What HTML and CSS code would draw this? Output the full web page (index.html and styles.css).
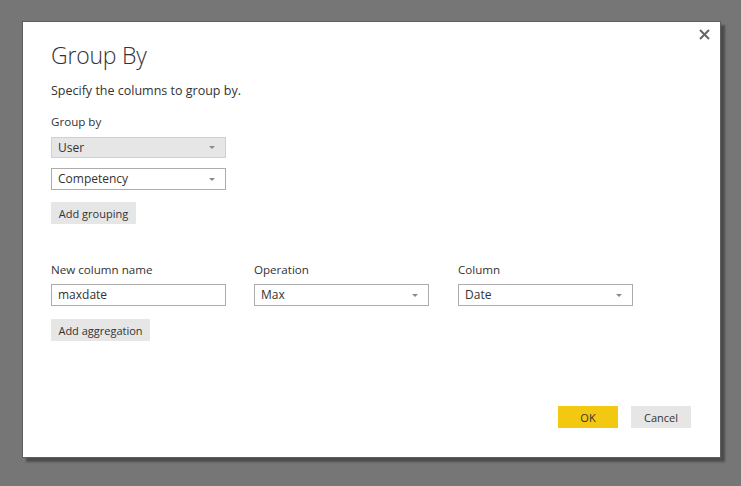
FILE: index.html
```html
<!DOCTYPE html>
<html>
<head>
<meta charset="utf-8">
<link rel="stylesheet" href="styles.css">
</head>
<body>
<div class="dialog">
  <button class="close" aria-label="Close">
    <svg width="11" height="11" viewBox="0 0 11 11"><path d="M1 1 L10 10 M10 1 L1 10" stroke="#666" stroke-width="2" fill="none"/></svg>
  </button>
  <h1 class="title">Group By</h1>
  <p class="subtitle">Specify the columns to group by.</p>
  <div class="label">Group by</div>
  <div class="select select-filled"><span>User</span><i class="caret"></i></div>
  <div class="select select-second"><span>Competency</span><i class="caret"></i></div>
  <button class="btn btn-add-group">Add grouping</button>
  <div class="agg">
    <div class="field">
      <div class="label">New column name</div>
      <div class="input">maxdate</div>
    </div>
    <div class="field">
      <div class="label">Operation</div>
      <div class="select"><span>Max</span><i class="caret"></i></div>
    </div>
    <div class="field">
      <div class="label">Column</div>
      <div class="select"><span>Date</span><i class="caret"></i></div>
    </div>
  </div>
  <button class="btn btn-add-agg">Add aggregation</button>
  <div class="footer">
    <button class="btn btn-ok">OK</button>
    <button class="btn btn-cancel">Cancel</button>
  </div>
</div>
</body>
</html>
```
FILE: styles.css
```css
html, body {
  margin: 0;
  padding: 0;
  height: 100%;
}
body {
  background: #767676;
  font-family: "Open Sans", "Noto Sans", sans-serif;
  color: #333;
  overflow: hidden;
}
.dialog {
  position: relative;
  box-sizing: border-box;
  margin: 21px 0 0 22px;
  width: 699px;
  height: 437px;
  background: #fff;
  border: 1px solid #5e5e5e;
  box-shadow: 4px 4px 2px rgba(0,0,0,0.35);
  padding: 0 0 0 28px;
  display: flex;
  flex-direction: column;
  align-items: flex-start;
}
.close {
  position: absolute;
  right: 10px;
  top: 7px;
  border: 0;
  background: transparent;
  padding: 0;
  width: 11px;
  height: 11px;
  line-height: 0;
}
.title {
  margin: 17px 0 0 0;
  font-size: 23px;
  font-weight: 300;
  line-height: 32px;
  color: #333;
  letter-spacing: -0.2px;
}
.subtitle {
  margin: 11px 0 0 0;
  font-size: 12.5px;
  line-height: 18px;
  color: #333;
}
.label {
  font-size: 11.6px;
  line-height: 16px;
  color: #333;
  margin-top: 14px;
}
.select, .input {
  box-sizing: border-box;
  width: 175px;
  height: 22px;
  border: 1px solid #acacac;
  background: #fff;
  font-size: 12px;
  line-height: 20px;
  padding: 0 0 0 6px;
  display: flex;
  align-items: center;
  justify-content: space-between;
  color: #333;
}
.select-filled {
  margin-top: 7px;
  background: #e6e6e6;
  border-color: #d0d0d0;
  height: 21px;
}
.select-second {
  margin-top: 10px;
}
.caret {
  width: 0;
  height: 0;
  border-left: 3px solid transparent;
  border-right: 3px solid transparent;
  border-top: 3px solid #8a8a8a;
  margin-right: 10px;
}
.btn {
  border: 0;
  font-family: inherit;
  font-size: 11px;
  color: #333;
  background: #e6e6e6;
  height: 22px;
  padding: 0 10px;
  cursor: pointer;
}
.btn-add-group {
  margin-top: 12px;
  width: 85px;
  padding: 0;
}
.agg {
  margin-top: 38px;
  display: grid;
  grid-template-columns: 203px 204px 175px;
}
.agg .label {
  margin-top: 0;
}
.agg .select, .agg .input {
  margin-top: 6px;
}
.btn-add-agg {
  margin-top: 13px;
  width: 99px;
  padding: 0;
}
.footer {
  margin-top: auto;
  margin-bottom: 29px;
  align-self: flex-end;
  margin-right: 29px;
  display: flex;
  gap: 13px;
}
.btn-ok {
  width: 60px;
  background: #f2c811;
}
.btn-cancel {
  width: 60px;
}
```
